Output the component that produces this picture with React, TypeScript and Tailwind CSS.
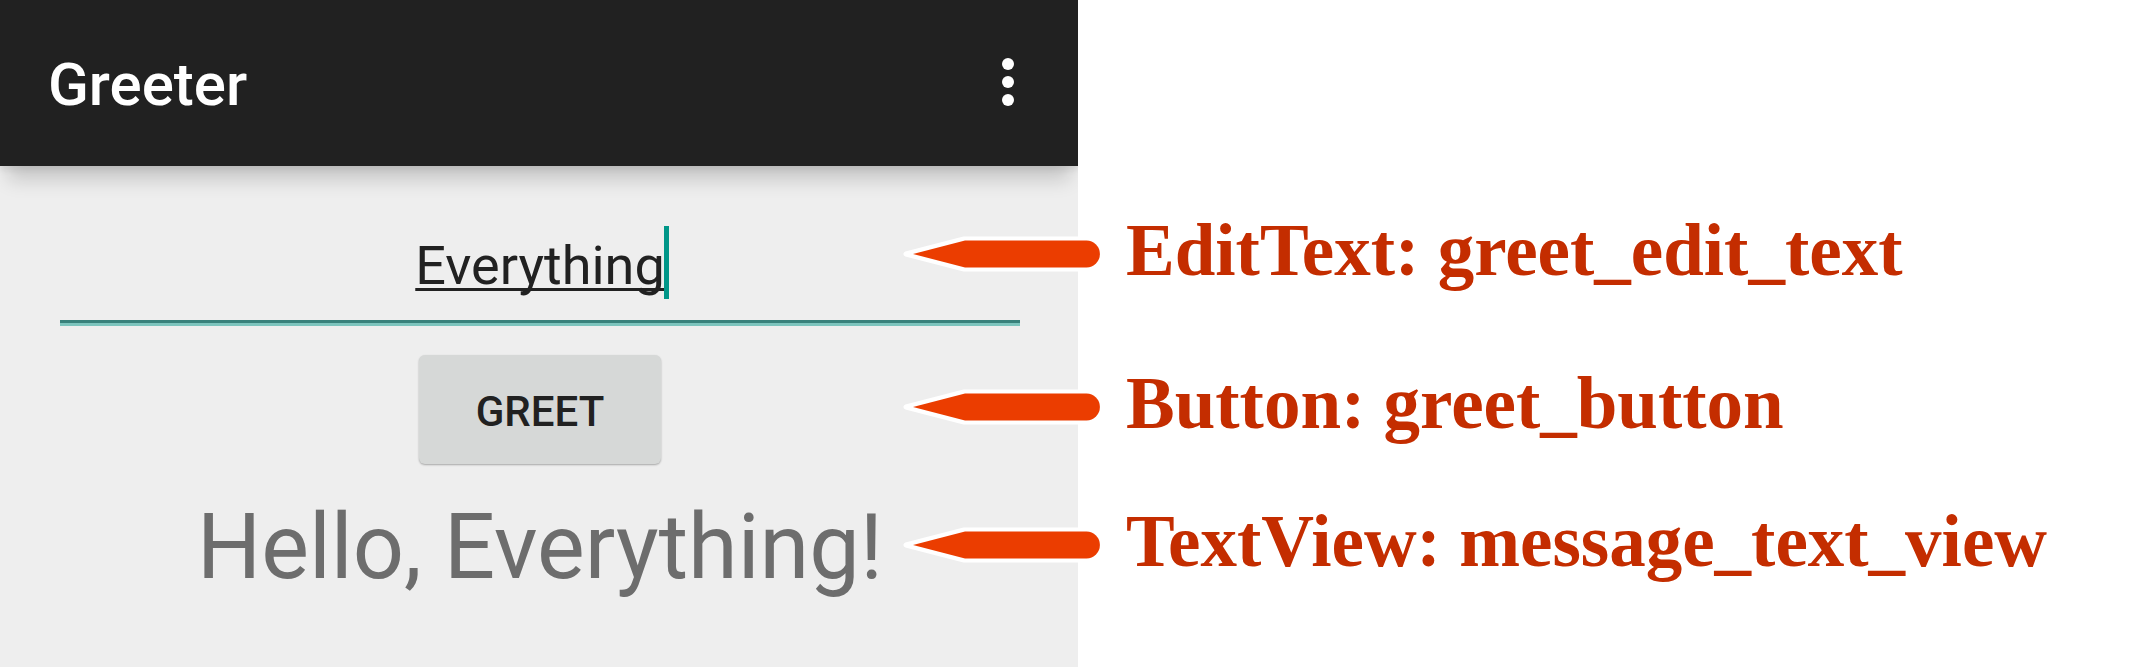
const annotations = [
  { id: "edit", text: "EditText: greet_edit_text", spacing: "mt-[214px]" },
  { id: "button", text: "Button: greet_button", spacing: "mt-[73px]" },
  { id: "message", text: "TextView: message_text_view", spacing: "mt-[58px]" },
];

function Pointer() {
  return (
    <svg
      className="-ml-[176px] mr-[25px] h-[36px] w-[199px] shrink-0"
      viewBox="0 0 199 36"
      aria-hidden="true"
    >
      <path
        d="M4 18 L62 3 H184 A15 15 0 0 1 184 33 H62 Z"
        fill="#ffffff"
        stroke="#ffffff"
        strokeWidth="5"
        strokeLinejoin="round"
      />
      <path d="M11 18 L63 4.6 H184.5 A13.4 13.4 0 0 1 184.5 31.4 H63 Z" fill="#eb3d00" />
    </svg>
  );
}

function Annotation({ text, spacing }: { text: string; spacing: string }) {
  return (
    <li className={"flex h-[80px] items-center whitespace-nowrap " + spacing}>
      <Pointer />
      <span className="pb-[6px]">{text}</span>
    </li>
  );
}

function AppBar() {
  return (
    <header className="relative flex h-[166px] items-center justify-between bg-[#212121] pl-12 pr-[46px] shadow-[0_4px_6px_rgba(0,0,0,0.08),0_22px_18px_-8px_rgba(0,0,0,0.16)]">
      <h1 className="pt-[3px] text-[60px] leading-[72px] font-medium text-white">Greeter</h1>
      <button type="button" aria-label="More options" className="mb-[2px] flex h-12 w-12 items-center justify-center">
        <svg className="h-12 w-3" viewBox="0 0 12 48" fill="#ffffff" aria-hidden="true">
          <circle cx="6" cy="6" r="6" />
          <circle cx="6" cy="24" r="6" />
          <circle cx="6" cy="42" r="6" />
        </svg>
      </button>
    </header>
  );
}

export default function App() {
  return (
    <div className="grid min-h-screen grid-cols-[1078fr_1058fr] bg-white">
      <section className="overflow-hidden bg-[#eeeeee] font-['Roboto',sans-serif] text-[#212121]">
        <AppBar />
        <main className="flex flex-col items-center pt-[60px] pr-[58px] pl-[60px]">
          <div className="relative w-full border-b-3 border-[#7cc4bd]">
            <input
              type="text"
              aria-label="Name"
              defaultValue="Everything"
              spellCheck={false}
              className="block h-[97px] w-full border-b-3 border-[#38817b] bg-transparent pb-[16px] text-center text-[54px] leading-[76px] underline decoration-[3px] underline-offset-[4px] outline-none [text-decoration-skip-ink:none]"
            />
            <span className="absolute top-0 left-1/2 ml-[124px] h-[73px] w-[5px] bg-[#009688]" />
          </div>
          <button
            type="button"
            className="mt-[29px] h-[109px] w-[242px] rounded-md bg-[#d6d8d7] pt-[4px] text-[42px] leading-[48px] font-medium shadow-[0_1px_2px_rgba(0,0,0,0.3)]"
          >
            GREET
          </button>
          <p className="mt-[31px] text-[90px] leading-[106px] whitespace-nowrap text-[#6d6d6d]">
            Hello, Everything!
          </p>
        </main>
      </section>
      <ul className="relative font-['Liberation_Serif',serif] text-[73px] leading-[80px] font-bold text-[#c42d00]">
        {annotations.map((item) => (
          <Annotation key={item.id} text={item.text} spacing={item.spacing} />
        ))}
      </ul>
    </div>
  );
}
